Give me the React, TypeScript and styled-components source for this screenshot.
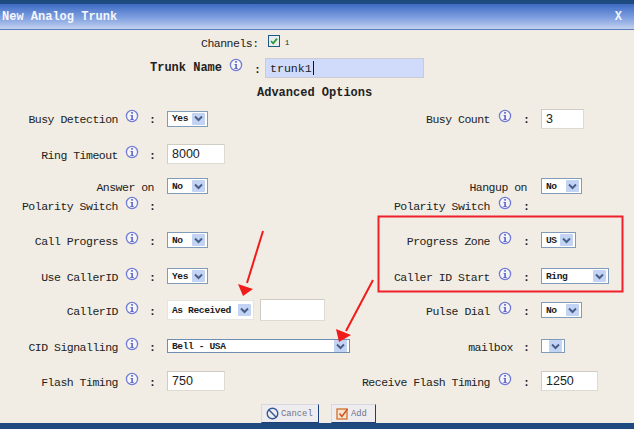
import styled, { createGlobalStyle } from "styled-components";

const GlobalStyle = createGlobalStyle`
  html, body {
    margin: 0;
    padding: 0;
    background: #f1ede4;
  }
`;

const Page = styled.div`
  position: relative;
  width: 634px;
  height: 429px;
  overflow: hidden;
  display: flex;
  flex-direction: column;
  background: #f1ede4;
  color: #222;
  font-family: "Liberation Mono", monospace;
  font-size: 11.5px;
  letter-spacing: -0.5px;
`;

const TopBand = styled.div`
  height: 4px;
  background: #1f4a80;
`;

const TitleBar = styled.header`
  height: 25px;
  display: flex;
  justify-content: space-between;
  align-items: center;
  padding: 0 12px 0 2px;
  background: linear-gradient(#3d6bc4, #7f9fe0 55%, #c3d2ef);
  border-bottom: 1px solid #5a7cbc;
  color: #f4f6fb;
  font-size: 12px;
  font-weight: bold;
  letter-spacing: 0;
`;

const Form = styled.main`
  flex: 1;
  display: flex;
  flex-direction: column;
`;

const BottomBand = styled.div`
  height: 6px;
  background: #1f4a80;
`;

const TopRow = styled.div<{ $h: number; $left: number }>`
  height: ${(p) => p.$h}px;
  display: flex;
  align-items: center;
  padding-left: ${(p) => p.$left}px;
`;

const Row = styled.div<{ $h: number }>`
  height: ${(p) => p.$h}px;
  display: grid;
  grid-template-columns: 360px 1fr;
  align-items: center;
`;

const Field = styled.div<{ $right?: boolean }>`
  display: grid;
  grid-template-columns: ${(p) => (p.$right ? 132 : 118)}px 31px 18px auto;
  align-items: center;
  justify-content: start;
`;

const Label = styled.span<{ $right?: boolean }>`
  padding-top: 2px;
  padding-right: ${(p) => (p.$right ? 2 : 0)}px;
  text-align: right;
  white-space: nowrap;
`;

const IconCell = styled.span<{ $right?: boolean }>`
  display: flex;
  padding-left: ${(p) => (p.$right ? 6 : 7)}px;
  margin-top: -5px;
`;

const Colon = styled.span`
  padding-top: 2px;
  font-weight: bold;
`;

const MailLabel = styled(Label)`
  grid-column: 1 / 3;
  padding-right: 10px;
`;

const StackedLabel = styled.div`
  grid-column: 1 / 4;
  display: flex;
  flex-direction: column;
  align-items: flex-end;
  gap: 4px;
  padding: 4px 0;
`;

const FirstLine = styled.span<{ $pad: number }>`
  padding-right: ${(p) => p.$pad}px;
  white-space: nowrap;
`;

const SecondLine = styled.div`
  display: grid;
  grid-template-columns: auto 31px 18px;
  align-items: center;
`;

const SelectBox = styled.div<{ $w: number; $h?: number; $plain?: boolean; $strong?: boolean }>`
  width: ${(p) => p.$w}px;
  height: ${(p) => p.$h ?? 16}px;
  box-sizing: border-box;
  display: flex;
  align-items: center;
  justify-content: space-between;
  padding: 0 2px 0 4px;
  background: #fff;
  border: 1px solid ${(p) => (p.$plain ? "#e6e4de" : p.$strong ? "#6f8eb0" : "#7f9db9")};
  font-size: 9.6px;
  font-weight: bold;
  letter-spacing: -0.4px;
  color: #1c1c1c;
  white-space: nowrap;
`;

const ArrowButton = styled.span`
  width: 13px;
  height: 12px;
  display: flex;
  align-items: center;
  justify-content: center;
  background: #c3d3f4;
  border-radius: 1px;
`;

const AlignTop = styled.div`
  align-self: start;
  padding-top: 1px;
`;

const TextBox = styled.div<{ $w: number; $h?: number }>`
  width: ${(p) => p.$w}px;
  height: ${(p) => p.$h ?? 20}px;
  box-sizing: border-box;
  display: flex;
  align-items: center;
  padding-left: 4px;
  background: #fff;
  border: 1px solid #dedbd2;
  border-top-color: #cfccc4;
  border-left-color: #cfccc4;
  font-family: "Liberation Sans", sans-serif;
  font-size: 12.5px;
  letter-spacing: 0;
  color: #222;
`;

const CallerGroup = styled.div`
  display: flex;
  align-items: center;
  gap: 6px;
`;

const ChannelText = styled.span`
  width: 67px;
`;

const CheckSlot = styled.span`
  display: flex;
  margin-top: -4px;
`;

const ChannelNumber = styled.span`
  margin-left: 5px;
  font-size: 7px;
`;

const TrunkLabel = styled.span`
  width: 79px;
  font-size: 12px;
  font-weight: bold;
  letter-spacing: 0;
  white-space: nowrap;
`;

const TrunkIcon = styled.span`
  width: 25px;
  display: flex;
  margin-top: -6px;
`;

const TrunkColon = styled(Colon)`
  width: 11px;
`;

const TrunkInput = styled.div`
  width: 159px;
  height: 20px;
  box-sizing: border-box;
  display: flex;
  align-items: center;
  padding-left: 4px;
  background: #d0dbfb;
  border: 1px solid #c9cbd6;
  font-size: 11.6px;
  letter-spacing: 0;
`;

const Caret = styled.span`
  width: 1px;
  height: 14px;
  margin-left: 1px;
  background: #111;
`;

const SectionTitle = styled.h2`
  height: 26px;
  margin: 0;
  padding-left: 257px;
  display: flex;
  align-items: center;
  font-size: 12px;
  font-weight: bold;
  letter-spacing: 0;
`;

const ButtonRow = styled.div`
  height: 19px;
  display: flex;
  gap: 12px;
  padding-left: 261px;
`;

const Button = styled.button<{ $w: number }>`
  width: ${(p) => p.$w}px;
  height: 19px;
  padding: 0 0 0 4px;
  display: flex;
  align-items: center;
  gap: 2px;
  background: #eeecef;
  border: 1px solid #d8d8e4;
  border-right-color: #1d3f78;
  border-bottom-color: #1d3f78;
  font-family: "Liberation Mono", monospace;
  font-size: 8.8px;
  color: #6e7488;
`;

const Annotations = styled.svg`
  position: absolute;
  inset: 0;
  pointer-events: none;
`;

function InfoIcon() {
  return (
    <svg width="14" height="14" viewBox="0 0 14 14">
      <circle cx="7" cy="7" r="5.6" fill="#f6f5f6" stroke="#727bd6" strokeWidth="1.3" />
      <rect x="6.2" y="3" width="1.7" height="1.7" fill="#5d67cc" />
      <path d="M5.6 6h2.3v4h.8v1H5.4v-1h.9V7h-.7z" fill="#5d67cc" />
    </svg>
  );
}

function Select({ value, w, h, plain, strong }: { value: string; w: number; h?: number; plain?: boolean; strong?: boolean }) {
  return (
    <SelectBox $w={w} $h={h} $plain={plain} $strong={strong}>
      <span>{value}</span>
      <ArrowButton>
        <svg width="9" height="7" viewBox="0 0 9 7">
          <path d="M1 1.5 4.5 5 8 1.5" fill="none" stroke="#4a5f88" strokeWidth="2" />
        </svg>
      </ArrowButton>
    </SelectBox>
  );
}

function Item({ label, right, children }: { label: string; right?: boolean; children: React.ReactNode }) {
  return (
    <Field $right={right}>
      <Label $right={right}>{label}</Label>
      <IconCell $right={right}>
        <InfoIcon />
      </IconCell>
      <Colon>:</Colon>
      {children}
    </Field>
  );
}

function PolarityItem({ first, right, pad, value }: { first: string; right?: boolean; pad: number; value: string }) {
  return (
    <Field $right={right}>
      <StackedLabel>
        <FirstLine $pad={pad}>{first}</FirstLine>
        <SecondLine>
          <Label $right={right}>Polarity Switch</Label>
          <IconCell $right={right}>
            <InfoIcon />
          </IconCell>
          <Colon>:</Colon>
        </SecondLine>
      </StackedLabel>
      <AlignTop>
        <Select value={value} w={41} />
      </AlignTop>
    </Field>
  );
}

export default function App() {
  return (
    <Page>
      <GlobalStyle />
      <TopBand />
      <TitleBar>
        <span>New Analog Trunk</span>
        <span>X</span>
      </TitleBar>
      <Form>
        <TopRow $h={26} $left={201}>
          <ChannelText>Channels:</ChannelText>
          <CheckSlot>
            <svg width="12" height="12" viewBox="0 0 12 12">
              <rect x="0.5" y="0.5" width="11" height="11" fill="#e9eef2" stroke="#1f5a86" />
              <path d="M3 6l2.2 2.4L9 3.6" fill="none" stroke="#2f9a3a" strokeWidth="1.8" />
            </svg>
          </CheckSlot>
          <ChannelNumber>1</ChannelNumber>
        </TopRow>
        <TopRow $h={24} $left={150}>
          <TrunkLabel>Trunk Name</TrunkLabel>
          <TrunkIcon>
            <InfoIcon />
          </TrunkIcon>
          <TrunkColon>:</TrunkColon>
          <TrunkInput>
            trunk1
            <Caret />
          </TrunkInput>
        </TopRow>
        <SectionTitle>Advanced Options</SectionTitle>
        <Row $h={25}>
          <Item label="Busy Detection">
            <Select value="Yes" w={41} />
          </Item>
          <Item label="Busy Count" right>
            <TextBox $w={43}>3</TextBox>
          </Item>
        </Row>
        <Row $h={46}>
          <Item label="Ring Timeout">
            <TextBox $w={58}>8000</TextBox>
          </Item>
          <div />
        </Row>
        <Row $h={37}>
          <PolarityItem first="Answer on" pad={13} value="No" />
          <PolarityItem first="Hangup on" pad={14} value="No" right />
        </Row>
        <Row $h={52}>
          <Item label="Call Progress">
            <Select value="No" w={41} />
          </Item>
          <Item label="Progress Zone" right>
            <Select value="US" w={35} />
          </Item>
        </Row>
        <Row $h={20}>
          <Item label="Use CallerID">
            <Select value="Yes" w={41} />
          </Item>
          <Item label="Caller ID Start" right>
            <Select value="Ring" w={68} />
          </Item>
        </Row>
        <Row $h={48}>
          <Item label="CallerID">
            <CallerGroup>
              <Select value="As Received" w={87} h={20} plain />
              <TextBox $w={65} $h={22} />
            </CallerGroup>
          </Item>
          <Item label="Pulse Dial" right>
            <Select value="No" w={41} />
          </Item>
        </Row>
        <Row $h={24}>
          <Item label="CID Signalling">
            <Select value="Bell - USA" w={183} h={14} strong />
          </Item>
          <Field $right>
            <MailLabel>mailbox</MailLabel>
            <Colon>:</Colon>
            <Select value="" w={24} h={14} />
          </Field>
        </Row>
        <Row $h={46}>
          <Item label="Flash Timing">
            <TextBox $w={58}>750</TextBox>
          </Item>
          <Item label="Receive Flash Timing" right>
            <TextBox $w={57}>1250</TextBox>
          </Item>
        </Row>
        <ButtonRow>
          <Button $w={58}>
            <svg width="13" height="13" viewBox="0 0 13 13">
              <circle cx="6.5" cy="6.5" r="5.3" fill="none" stroke="#31589a" strokeWidth="1.4" />
              <path d="M2.8 2.8l7.4 7.4" stroke="#31589a" strokeWidth="1.4" />
            </svg>
            Cancel
          </Button>
          <Button $w={45}>
            <svg width="13" height="13" viewBox="0 0 13 13">
              <rect x="1" y="2" width="10" height="10" fill="#f6e4d0" stroke="#d2702a" strokeWidth="1.3" />
              <path d="M3.5 6.5l2.4 3L11.5 2" fill="none" stroke="#d2541e" strokeWidth="1.5" />
            </svg>
            Add
          </Button>
        </ButtonRow>
      </Form>
      <BottomBand />
      <Annotations width="634" height="429" viewBox="0 0 634 429">
        <rect x="378.5" y="216.5" width="244" height="75" fill="none" stroke="#f0202a" strokeWidth="2" />
        <path d="M263 231 247 283" stroke="#f01c1c" strokeWidth="2" />
        <path d="M243 296 238 284 253 289z" fill="#f01c1c" />
        <path d="M373 280 346 331" stroke="#f01c1c" strokeWidth="2" />
        <path d="M339 342 336 329 351 335z" fill="#f01c1c" />
      </Annotations>
    </Page>
  );
}
